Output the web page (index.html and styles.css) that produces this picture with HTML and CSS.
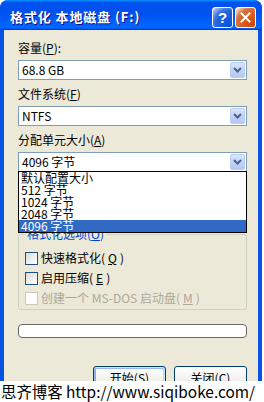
FILE: index.html
```html
<!DOCTYPE html>
<html lang="zh-CN">
<head>
    <meta charset="UTF-8">
    <meta name="viewport" content="width=device-width, initial-scale=1.0">
    <title>格式化 本地磁盘 (F:)</title>
    <link rel="stylesheet" href="styles.css">
</head>
<body>
    <div class="window">
        <div class="titlebar">
            <span class="title">格式化 本地磁盘 (F:)</span>
            <div class="controls">
                <button type="button" class="ctl help">?</button>
                <button type="button" class="ctl close">
                    <svg width="11" height="11" viewBox="0 0 11 11"><path d="M1.5 1.5 L9.5 9.5 M9.5 1.5 L1.5 9.5" stroke="#fff" stroke-width="2" stroke-linecap="square"/></svg>
                </button>
            </div>
        </div>

        <div class="dialog">
            <label class="field-label">容量(<u>P</u>):</label>
            <div class="combo">
                <span class="value">68.8 GB</span>
                <span class="arrow"><svg width="9" height="6" viewBox="0 0 9 6"><path d="M1 1 L4.5 4.5 L8 1" fill="none" stroke="#4D6185" stroke-width="2"/></svg></span>
            </div>

            <label class="field-label">文件系统(<u>F</u>)</label>
            <div class="combo">
                <span class="value">NTFS</span>
                <span class="arrow"><svg width="9" height="6" viewBox="0 0 9 6"><path d="M1 1 L4.5 4.5 L8 1" fill="none" stroke="#4D6185" stroke-width="2"/></svg></span>
            </div>

            <label class="field-label">分配单元大小(<u>A</u>)</label>
            <div class="combo open">
                <span class="value">4096 字节</span>
                <span class="arrow"><svg width="9" height="6" viewBox="0 0 9 6"><path d="M1 1 L4.5 4.5 L8 1" fill="none" stroke="#4D6185" stroke-width="2"/></svg></span>
                <!-- open dropdown list, covers the volume label row -->
                <ul class="droplist">
                    <li>默认配置大小</li>
                    <li>512 字节</li>
                    <li>1024 字节</li>
                    <li>2048 字节</li>
                    <li class="sel">4096 字节</li>
                </ul>
            </div>

            <fieldset class="options">
                <legend>格式化选项(<u>O</u>)</legend>
                <label class="check"><span class="box"></span>快速格式化(<u>Q</u>)</label>
                <label class="check"><span class="box"></span>启用压缩(<u>E</u>)</label>
                <label class="check disabled"><span class="box"></span>创建一个 MS-DOS 启动盘(<u>M</u>)</label>
            </fieldset>

            <div class="progress"></div>

            <div class="buttons">
                <button type="button" class="btn default">开始(<u>S</u>)</button>
                <button type="button" class="btn">关闭(<u>C</u>)</button>
            </div>
        </div>
    </div>

    <div class="watermark">思齐博客 http://www.siqiboke.com/</div>
</body>
</html>
```

FILE: styles.css
```css
body {
    margin: 0;
    width: 264px;
    height: 402px;
    overflow: hidden;
    position: relative;
    background: #fff;
    font-family: "Noto Sans CJK SC", sans-serif;
    font-size: 12px;
    color: #000;
}
.window {
    width: 262px;
    height: 420px;
    background: #0A52E3;
    border-radius: 8px 8px 0 0;
    overflow: hidden;
    display: flex;
    flex-direction: column;
}
.titlebar {
    height: 30px;
    box-sizing: border-box;
    padding: 4px 6px 0 10px;
    display: flex;
    align-items: center;
    background: linear-gradient(180deg, #0997FF, #0053EE 8%, #0050EE 40%, #0066FF 88%, #0066FF 93%, #005BFF 95%, #003DD7 96%, #003DD7);
}
.title {
    color: #fff;
    font-weight: bold;
    font-size: 13px;
    line-height: 16px;
    letter-spacing: 0.9px;
    text-shadow: 1px 1px #0F1089;
    white-space: nowrap;
}
.controls {
    margin-left: auto;
    display: flex;
    gap: 2px;
}
.ctl {
    width: 21px;
    height: 21px;
    box-sizing: border-box;
    padding: 0;
    border: 1px solid #fff;
    border-radius: 3px;
    display: flex;
    align-items: center;
    justify-content: center;
}
.help {
    background: radial-gradient(circle at 90% 90%, #0054E9 0%, #2263D5 55%, #4479E4 70%, #A3BBEC 90%, #fff 100%);
    color: #fff;
    font: bold 15px "Liberation Sans", sans-serif;
}
.close {
    background: radial-gradient(circle at 90% 90%, #CC4600 0%, #DC6527 55%, #CD7546 70%, #FFCCB2 90%, #fff 100%);
}
.dialog {
    flex: 1;
    margin: 0 4px;
    padding: 11px 0 0 14px;
    background: #ECE9D8;
}
.field-label {
    display: block;
    line-height: 14px;
    margin-bottom: 5px;
}
.combo {
    position: relative;
    width: 229px;
    height: 20px;
    box-sizing: border-box;
    border: 1px solid #7F9DB9;
    background: #fff;
    display: flex;
    align-items: center;
    padding-left: 3px;
    margin-bottom: 7px;
    line-height: 18px;
}
/* room for the volume label row hidden under the list */
.combo.open {
    margin-bottom: 55px;
}
.combo .arrow {
    margin-left: auto;
    margin-right: 1px;
    width: 15px;
    height: 16px;
    box-sizing: border-box;
    border: 1px solid #BBCCF1;
    border-radius: 2px;
    background: linear-gradient(180deg, #DCE6FD, #C1D3FB 50%, #B4C8F6);
    display: flex;
    align-items: center;
    justify-content: center;
}
.droplist {
    position: absolute;
    left: -1px;
    top: 18px;
    z-index: 2;
    width: 229px;
    box-sizing: border-box;
    margin: 0;
    padding: 0;
    list-style: none;
    border: 1px solid #000;
    background: #fff;
}
.droplist li {
    height: 12px;
    line-height: 12px;
    padding-left: 2px;
    white-space: nowrap;
}
.droplist li.sel {
    background: #316AC5;
    color: #fff;
}
.options {
    margin: 0;
    width: 229px;
    box-sizing: border-box;
    border: 1px solid #D0D0BF;
    border-radius: 3px;
    padding: 10px 6px 4px 6px;
}
.options legend {
    color: #0046D5;
    padding: 0 2px;
    line-height: 14px;
}
.check {
    display: flex;
    align-items: center;
    gap: 3px;
    height: 14px;
    line-height: 14px;
    white-space: nowrap;
}
.check + .check {
    margin-top: 6px;
}
.box {
    width: 13px;
    height: 13px;
    box-sizing: border-box;
    border: 1px solid #1C5180;
    background: linear-gradient(135deg, #DCDCD7, #fff);
}
.check.disabled {
    color: #ACA899;
}
.check.disabled .box {
    border-color: #CAC8BB;
    background: #fff;
}
.progress {
    margin-top: 14px;
    width: 229px;
    height: 14px;
    box-sizing: border-box;
    border: 1px solid #686868;
    border-radius: 4px;
    background: #fff;
}
.buttons {
    width: 229px;
    margin-top: 28px;
    display: flex;
    justify-content: flex-end;
    gap: 8px;
}
.btn {
    width: 73px;
    height: 23px;
    padding: 0;
    border: 1px solid #003C74;
    border-radius: 3px;
    background: linear-gradient(180deg, #fff, #ECEBE6 86%, #D6D0C5);
    font-family: "Noto Sans CJK SC", sans-serif;
    font-size: 12px;
    color: #000;
}
.btn.default {
    box-shadow: inset -1px 1px #CEE7FF, inset 1px 2px #98B8EA, inset -2px 2px #BCD4F6, inset 1px -1px #89ADE4, inset 2px -2px #89ADE4;
}
.watermark {
    position: absolute;
    left: 0;
    right: 0;
    bottom: 0;
    height: 21px;
    padding-left: 1px;
    background: #fff;
    font-size: 15.4px;
    line-height: 21px;
    white-space: nowrap;
}
```
